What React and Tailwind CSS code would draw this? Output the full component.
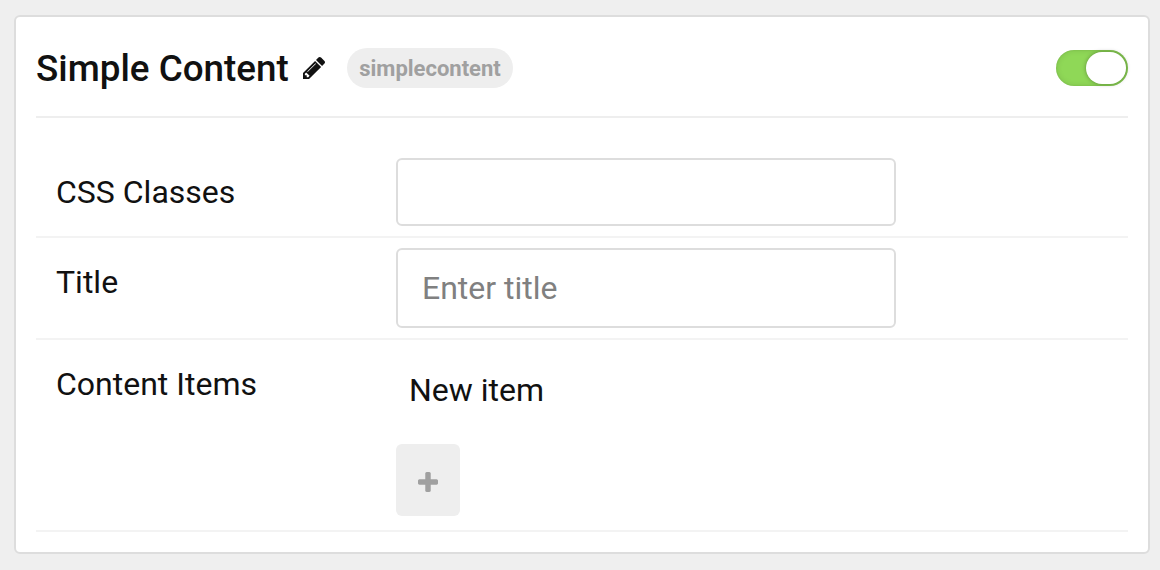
function PencilIcon({ className }) {
  return (
    <svg viewBox="0 21 1515 1515" fill="currentColor" className={className}>
      <path d="M363 1408l91-91-235-235-91 91v107h128v128h107zm523-928q0-22-22-22-10 0-17 7l-542 542q-7 7-7 17 0 22 22 22 10 0 17-7l542-542q7-7 7-17zm-54-192l416 416-832 832h-416v-416zm683 96q0 53-37 90l-166 166-416-416 166-165q36-38 90-38 53 0 91 38l235 234q37 39 37 91z" />
    </svg>
  );
}

function PlusIcon({ className }) {
  return (
    <svg viewBox="192 128 1408 1408" fill="currentColor" className={className}>
      <path d="M1600 736v192q0 40-28 68t-68 28h-416v416q0 40-28 68t-68 28h-192q-40 0-68-28t-28-68v-416h-416q-40 0-68-28t-28-68v-192q0-40 28-68t68-28h416v-416q0-40 28-68t68-28h192q40 0 68 28t28 68v416h416q40 0 68 28t28 68z" />
    </svg>
  );
}

function Row({ label, className, children }) {
  return (
    <div className={`flex border-b-2 border-[#f3f3f3] pt-[10px] pl-5 ${className}`}>
      <div className="w-[340px] shrink-0 pt-[10px] text-[32px] leading-[48px]">{label}</div>
      <div>{children}</div>
    </div>
  );
}

export default function App() {
  return (
    <div className="h-[570px] w-[1160px] bg-[#efefef] pt-[15px] pl-[14px] font-['Roboto',sans-serif] text-[#111]">
      <div className="h-[539px] w-[1136px] rounded-md border-2 border-[#ddd] bg-white px-5">
        <div className="flex h-[101px] items-center border-b-2 border-[#eee] pt-[2px]">
          <h1 className="w-[253px] pt-[2px] text-[36.8px] leading-[48px] font-medium whitespace-nowrap">Simple Content</h1>
          <PencilIcon className="ml-[14px] size-[22px]" />
          <span className="ml-[22px] flex h-10 w-[166px] items-center justify-center rounded-full bg-[#eee] pt-[2px] text-[22px] font-bold text-[#a0a0a0]">simplecontent</span>
          <div className="ml-auto flex h-9 w-[72px] justify-end rounded-full bg-[#8fd857] p-0.5 shadow-[inset_0_0_6px_rgba(0,0,0,0.12),inset_0_0_2px_rgba(0,0,0,0.1)]">
            <div className="h-8 w-10 rounded-full bg-white shadow-[0_0_4px_rgba(0,0,0,0.35)]" />
          </div>
        </div>
        <div className="pt-[30px]">
          <Row label="CSS Classes" className="h-[90px]">
            <input className="h-[68px] w-[500px] rounded-md border-2 border-[#ddd] px-6 text-[32px] outline-none" />
          </Row>
          <Row label="Title" className="h-[102px]">
            <input placeholder="Enter title" className="h-20 w-[500px] rounded-md border-2 border-[#ddd] px-6 text-[32px] outline-none placeholder:text-[#808080]" />
          </Row>
          <Row label="Content Items" className="h-48">
            <div className="pt-4 pl-[13px] text-[32px] leading-[48px]">New item</div>
            <button className="mt-[30px] flex h-[72px] w-16 items-center justify-center rounded-md bg-[#eee] pt-1 text-[#a0a0a0]">
              <PlusIcon className="size-5" />
            </button>
          </Row>
        </div>
      </div>
    </div>
  );
}
